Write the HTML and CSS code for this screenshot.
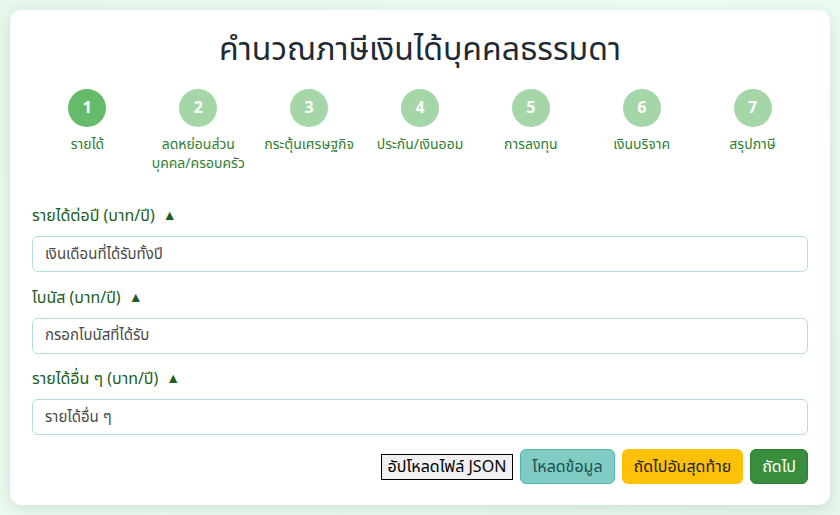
FILE: index.html
```html
<!DOCTYPE html>
<html lang="th">
<head>
<meta charset="utf-8">
<link rel="stylesheet" href="styles.css">
</head>
<body>
<div class="card">
  <h1 class="title">คำนวณภาษีเงินได้บุคคลธรรมดา</h1>
  <div class="steps">
    <div class="step active"><div class="circle">1</div><div class="step-label">รายได้</div></div>
    <div class="step"><div class="circle">2</div><div class="step-label">ลดหย่อนส่วน<br>บุคคล/ครอบครัว</div></div>
    <div class="step"><div class="circle">3</div><div class="step-label">กระตุ้นเศรษฐกิจ</div></div>
    <div class="step"><div class="circle">4</div><div class="step-label">ประกัน/เงินออม</div></div>
    <div class="step"><div class="circle">5</div><div class="step-label">การลงทุน</div></div>
    <div class="step"><div class="circle">6</div><div class="step-label">เงินบริจาค</div></div>
    <div class="step"><div class="circle">7</div><div class="step-label">สรุปภาษี</div></div>
  </div>
  <div class="field">
    <label class="field-label">รายได้ต่อปี (บาท/ปี) <span class="caret">▲</span></label>
    <input class="input" type="text" placeholder="เงินเดือนที่ได้รับทั้งปี">
  </div>
  <div class="field">
    <label class="field-label">โบนัส (บาท/ปี) <span class="caret">▲</span></label>
    <input class="input" type="text" placeholder="กรอกโบนัสที่ได้รับ">
  </div>
  <div class="field">
    <label class="field-label">รายได้อื่น ๆ (บาท/ปี) <span class="caret">▲</span></label>
    <input class="input" type="text" placeholder="รายได้อื่น ๆ">
  </div>
  <div class="actions">
    <span class="upload">อัปโหลดไฟล์ JSON</span>
    <button class="btn btn-teal">โหลดข้อมูล</button>
    <button class="btn btn-yellow">ถัดไปอันสุดท้าย</button>
    <button class="btn btn-green">ถัดไป</button>
  </div>
</div>
</body>
</html>
```
FILE: styles.css
```css
* { box-sizing: border-box; }
html, body { margin: 0; }
body {
  width: 840px;
  height: 515px;
  background: linear-gradient(135deg, #e6f7ec 0%, #eefbf3 50%, #e6f7ec 100%);
  font-family: "Noto Sans Thai", "Noto Sans", sans-serif;
  padding: 10px;
  overflow: hidden;
}
.card {
  background: #fff;
  border-radius: 12px;
  box-shadow: 0 4px 14px rgba(60, 120, 80, 0.18);
  padding: 20px 22px 22px;
  height: 495px;
}
.title {
  margin: 0;
  text-align: center;
  font-weight: 400;
  font-size: 32px;
  line-height: 40px;
  color: #1f2a33;
}
.steps {
  display: grid;
  grid-template-columns: repeat(7, 1fr);
  margin-top: 19px;
}
.step {
  display: flex;
  flex-direction: column;
  align-items: center;
}
.circle {
  width: 38px;
  height: 38px;
  border-radius: 50%;
  background: #a5d6a7;
  color: #fff;
  font-weight: 700;
  font-size: 16px;
  display: flex;
  align-items: center;
  justify-content: center;
}
.step.active .circle { background: #66bb6a; }
.step-label {
  margin-top: 8px;
  font-size: 14px;
  line-height: 19px;
  color: #2e7d32;
  text-align: center;
}
.field { margin-top: 14.5px; }
.steps + .field { margin-top: 32px; }
.field-label {
  display: flex;
  align-items: center;
  height: 22px;
  font-size: 16px;
  color: #1b5e20;
  margin-bottom: 9px;
}
.caret { font-size: 14px; line-height: 1; color: #1b5e20; margin-left: 8px; }
.input {
  display: block;
  width: 100%;
  height: 36px;
  border: 1px solid #b2dfdb;
  border-radius: 6px;
  padding: 0 12px;
  font-family: inherit;
  font-size: 15px;
  color: #333;
  outline: none;
}
.input::placeholder { color: #4a4a4a; }
.actions {
  display: flex;
  justify-content: flex-end;
  align-items: center;
  gap: 7px;
  margin-top: 14px;
}
.upload {
  border: 1px solid #000;
  background: #f0f0f0;
  font-size: 16px;
  line-height: 24px;
  padding: 0 6px;
  color: #000;
}
.btn {
  font-family: inherit;
  font-size: 16px;
  height: 35px;
  padding: 0 11px;
  border-radius: 6px;
  border: 1px solid transparent;
  cursor: pointer;
}
.btn-teal { background: #80cbc4; border-color: #4db6ac; color: #1d4f4a; }
.btn-yellow { background: #ffc107; color: #212529; }
.btn-green { background: #388e3c; border-color: #2e7d32; color: #fff; }
```
